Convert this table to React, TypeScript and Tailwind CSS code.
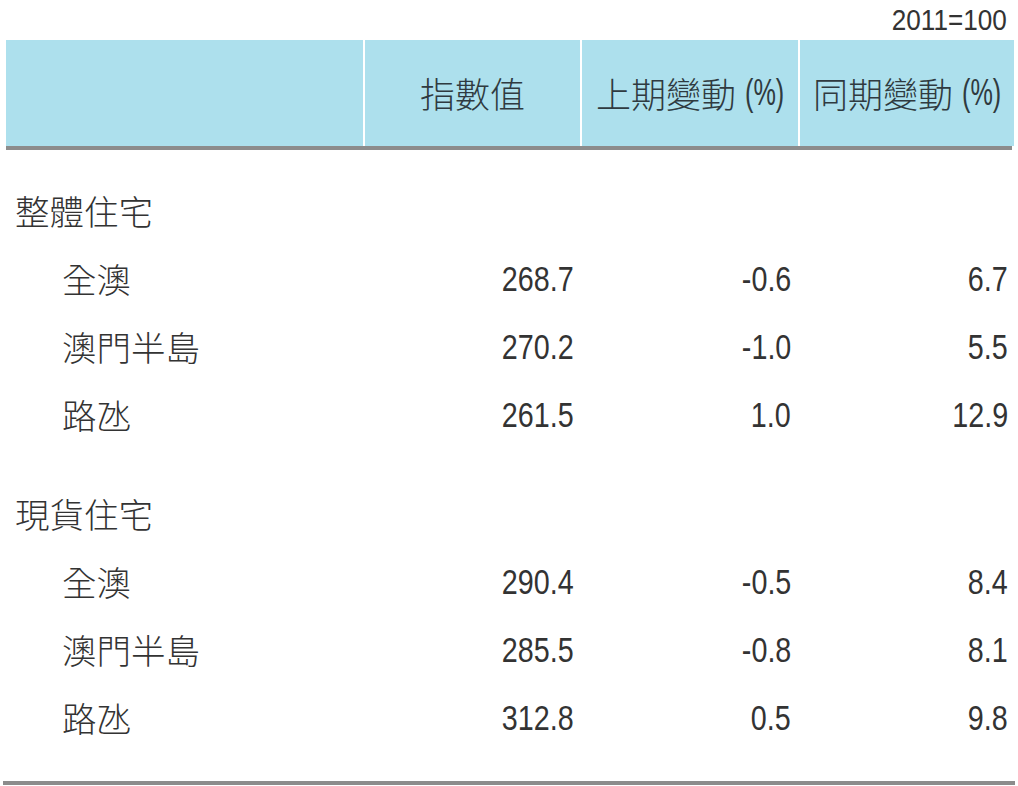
const groups = [
  {
    title: '整體住宅',
    rows: [
      { name: '全澳', value: '268.7', qoq: '-0.6', yoy: '6.7' },
      { name: '澳門半島', value: '270.2', qoq: '-1.0', yoy: '5.5' },
      { name: '路氹', value: '261.5', qoq: '1.0', yoy: '12.9' },
    ],
  },
  {
    title: '現貨住宅',
    rows: [
      { name: '全澳', value: '290.4', qoq: '-0.5', yoy: '8.4' },
      { name: '澳門半島', value: '285.5', qoq: '-0.8', yoy: '8.1' },
      { name: '路氹', value: '312.8', qoq: '0.5', yoy: '9.8' },
    ],
  },
]

const cols = 'grid grid-cols-[357px_215px_216px_214px] gap-x-[2px]'
const cjk = "font-['Noto_Sans_CJK_TC','Noto_Sans_CJK_SC',sans-serif] font-light"
const num = "font-['Liberation_Sans',Arial,sans-serif]"

export default function App() {
  return (
    <div className="w-[1018px] h-[786px] bg-white text-[#333] overflow-hidden">
      <div className="flex justify-end pr-[11px] pt-[4px] h-[40px]">
        <span className={`${num} inline-block text-[29px] leading-[32px] scale-x-[0.9] origin-right`}>
          2011=100
        </span>
      </div>

      <div className="px-[6px]">
        <div className={`${cols} h-[106px]`}>
          <div className="bg-[#ade0ed]" />
          <HeadCell>
            <span className={cjk}>指數值</span>
          </HeadCell>
          <HeadCell>
            <span className={cjk}>上期變動</span>
            <Pct />
          </HeadCell>
          <HeadCell>
            <span className={cjk}>同期變動</span>
            <Pct />
          </HeadCell>
        </div>
        <div className="h-[4px] bg-[#8c8c8c]" />

        <div className="pt-[27px] flex flex-col gap-[31px]">
          {groups.map((g) => (
            <div key={g.title}>
              <div className={`${cols} h-[68px] items-center`}>
                <div className={`${cjk} text-[34.5px] pl-[9px]`}>{g.title}</div>
              </div>
              {g.rows.map((r) => (
                <div key={r.name} className={`${cols} h-[68px] items-center`}>
                  <div className={`${cjk} text-[34.5px] pl-[56px]`}>{r.name}</div>
                  <Num className="pr-[6px]">{r.value}</Num>
                  <Num className="pr-[7px]">{r.qoq}</Num>
                  <Num className="pr-[6px]">{r.yoy}</Num>
                </div>
              ))}
            </div>
          ))}
        </div>
      </div>

      <div className="mt-[29px] mx-[3px] h-[4px] bg-[#8c8c8c]" />
    </div>
  )
}

function Num({ children, className }: { children: React.ReactNode; className?: string }) {
  return (
    <div className={`text-right ${className ?? ''}`}>
      <span className={`${num} inline-block text-[35px] scale-x-[0.82] origin-right`}>{children}</span>
    </div>
  )
}

function Pct() {
  return (
    <span className={`${num} inline-block text-[36px] ml-[9px] mr-[-17px] scale-x-[0.7] origin-left`}>
      (%)
    </span>
  )
}

function HeadCell({ children }: { children: React.ReactNode }) {
  return (
    <div className="bg-[#ade0ed] flex items-center justify-center text-[35px] text-[#2f3a40]">
      {children}
    </div>
  )
}
